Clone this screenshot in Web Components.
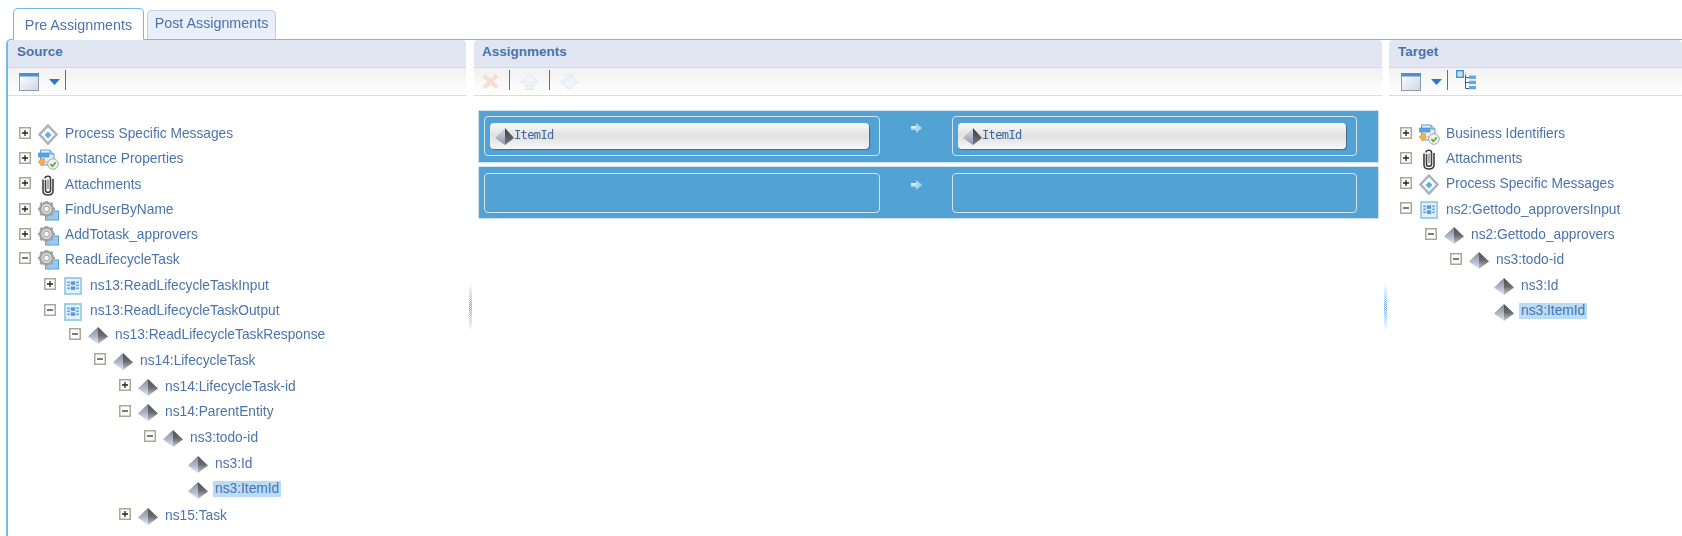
<!DOCTYPE html>
<html lang="en">
<head>
<meta charset="utf-8">
<title>Assignments</title>
<style>
html,body{margin:0;padding:0;background:#fff;height:536px;overflow:hidden;font-family:"Liberation Sans",Arial,sans-serif;color:#4b73ad}
tab-bar,assign-layout{filter:blur(.35px)}
</style>
</head>
<body>
<tab-bar>
  <tab-item active>Pre Assignments</tab-item>
  <tab-item>Post Assignments</tab-item>
</tab-bar>
<assign-layout>
  <map-pane heading="Source" pad="9">
    <tool-bar slot="tools" pad="11">
      <app-icon name="window"></app-icon>
      <app-icon name="drop"></app-icon>
      <tool-sep></tool-sep>
    </tool-bar>
    <tree-list>
      <tree-node level="0" toggle="plus" icon="message" h="25">Process Specific Messages</tree-node>
      <tree-node level="0" toggle="plus" icon="props" h="25">Instance Properties</tree-node>
      <tree-node level="0" toggle="plus" icon="clip" h="26">Attachments</tree-node>
      <tree-node level="0" toggle="plus" icon="gear" h="25">FindUserByName</tree-node>
      <tree-node level="0" toggle="plus" icon="gear" h="25">AddTotask_approvers</tree-node>
      <tree-node level="0" toggle="minus" icon="gear" h="24">ReadLifecycleTask</tree-node>
      <tree-node level="1" toggle="plus" icon="struct" h="28">ns13:ReadLifecycleTaskInput</tree-node>
      <tree-node level="1" toggle="minus" icon="struct" h="23">ns13:ReadLifecycleTaskOutput</tree-node>
      <tree-node level="2" toggle="minus" icon="pyramid" h="25">ns13:ReadLifecycleTaskResponse</tree-node>
      <tree-node level="3" toggle="minus" icon="pyramid" h="26">ns14:LifecycleTask</tree-node>
      <tree-node level="4" toggle="plus" icon="pyramid" h="26">ns14:LifecycleTask-id</tree-node>
      <tree-node level="4" toggle="minus" icon="pyramid" h="25">ns14:ParentEntity</tree-node>
      <tree-node level="5" toggle="minus" icon="pyramid" h="26">ns3:todo-id</tree-node>
      <tree-node level="6" icon="pyramid" h="26">ns3:Id</tree-node>
      <tree-node level="6" icon="pyramid" h="26" selected>ns3:ItemId</tree-node>
      <tree-node level="4" toggle="plus" icon="pyramid" h="26">ns15:Task</tree-node>
    </tree-list>
  </map-pane>
  <pane-gutter></pane-gutter>
  <map-pane heading="Assignments" pad="8">
    <tool-bar slot="tools" pad="8">
      <app-icon name="del"></app-icon>
      <tool-sep></tool-sep>
      <app-icon name="up"></app-icon>
      <tool-sep></tool-sep>
      <app-icon name="down"></app-icon>
    </tool-bar>
    <map-list>
      <map-row top="5">
        <map-box slot="from"><map-pill>ItemId</map-pill></map-box>
        <map-box slot="to"><map-pill>ItemId</map-pill></map-box>
      </map-row>
      <map-row top="6">
        <map-box slot="from"></map-box>
        <map-box slot="to"></map-box>
      </map-row>
    </map-list>
  </map-pane>
  <pane-gutter></pane-gutter>
  <map-pane heading="Target" pad="9">
    <tool-bar slot="tools" pad="12">
      <app-icon name="window"></app-icon>
      <app-icon name="drop"></app-icon>
      <tool-sep></tool-sep>
      <app-icon name="tree"></app-icon>
    </tool-bar>
    <tree-list>
      <tree-node level="0" toggle="plus" icon="props" h="25">Business Identifiers</tree-node>
      <tree-node level="0" toggle="plus" icon="clip" h="25">Attachments</tree-node>
      <tree-node level="0" toggle="plus" icon="message" h="25">Process Specific Messages</tree-node>
      <tree-node level="0" toggle="minus" icon="struct" h="26">ns2:Gettodo_approversInput</tree-node>
      <tree-node level="1" toggle="minus" icon="pyramid" h="25">ns2:Gettodo_approvers</tree-node>
      <tree-node level="2" toggle="minus" icon="pyramid" h="25">ns3:todo-id</tree-node>
      <tree-node level="3" icon="pyramid" h="27">ns3:Id</tree-node>
      <tree-node level="3" icon="pyramid" h="24" selected>ns3:ItemId</tree-node>
    </tree-list>
  </map-pane>
</assign-layout>
<script>
const ICONS = {
  pyramid: `<svg width="20" height="17" viewBox="0 0 20 17"><defs>
    <linearGradient id="a" x1="0" y1="0" x2="0" y2="1"><stop offset="0" stop-color="#808690"/><stop offset=".55" stop-color="#adb9cc"/><stop offset="1" stop-color="#e2e8f2"/></linearGradient>
    <linearGradient id="b" x1="0" y1="0" x2="0" y2="1"><stop offset="0" stop-color="#4c4d50"/><stop offset=".5" stop-color="#6a6c70"/><stop offset="1" stop-color="#c6cad0"/></linearGradient></defs>
    <polygon points="10,0 0,9.500 10,17" fill="url(#a)"/><polygon points="10,0 20,9.500 10,17" fill="url(#b)"/></svg>`,
  pyramid2: `<svg width="20" height="17" viewBox="0 0 20 17"><defs>
    <linearGradient id="c" x1="0" y1="0" x2="0" y2="1"><stop offset="0" stop-color="#d6deea"/><stop offset="1" stop-color="#8d99ad"/></linearGradient>
    <linearGradient id="d" x1="0" y1="0" x2="0" y2="1"><stop offset="0" stop-color="#3e3e40"/><stop offset="1" stop-color="#77797c"/></linearGradient></defs>
    <polygon points="11,0 1,10 11,17" fill="url(#c)"/><polygon points="11,0 20,10 11,17" fill="url(#d)"/></svg>`,
  message: `<svg width="20" height="21" viewBox="0 0 20 21"><polygon points="10,1.500 18.500,10.500 10,19.500 1.500,10.500" fill="#fafbfd" stroke="#a9b2c1" stroke-width="2.500"/><polygon points="10,5 15,10.500 10,16 5,10.500" fill="#fff"/><polygon points="10,7.500 13.500,11 10,14.500 6.500,11" fill="#5aaeee"/></svg>`,
  props: `<svg width="22" height="21" viewBox="0 0 22 21"><path d="M3.500 1h9.500l4 4v11H3.500z" fill="#e3effa" stroke="#5d9bd2"/><path d="M13 1v4h4" fill="#b5d5f0" stroke="#5d9bd2"/><rect x="1.500" y="4" width="10.500" height="4" fill="#5ba3e2" stroke="#4288c8" stroke-width=".6"/><path d="M7 9v3" stroke="#5d9bd2"/><polygon points="5,9 9,13 5,17 1,13" fill="#f8ae4c" stroke="#eb9a36" stroke-width=".6"/><rect x="8" y="12" width="5" height="2" fill="#f8d09a"/><circle cx="16" cy="15" r="5.300" fill="#f2f3f1" stroke="#a3a9a8"/><path d="M13.400 15l2 2.200 3.400-4" fill="none" stroke="#58a638" stroke-width="1.700"/></svg>`,
  clip: `<svg width="14" height="21" viewBox="0 0 14 21"><path d="M4.500 5v10.200c0 1.300 1 2 2.500 2s2.500-.7 2.500-2V3.500C9.500 2.200 8.500 1.300 7 1.300S4 2.200 4 3.500M2 4.500v11.200c0 2.800 2 4.300 5 4.300s5-1.500 5-4.300V4" fill="none" stroke="#3e3e3e" stroke-width="1.600"/><path d="M7 4.500v9.500" stroke="#8b8b8b" stroke-width="1.400"/></svg>`,
  gear: `<svg width="21" height="20" viewBox="0 0 21 20"><rect x="7.500" y="10" width="13" height="9" fill="#97c9f1" stroke="#55a0de"/><g transform="translate(8.500 8) scale(1.050)"><circle r="5.800" fill="none" stroke="#a2a2a2" stroke-width="2.800"/><g stroke="#a2a2a2" stroke-width="2.400"><path d="M0-8.200V8.200M-8.200 0H8.200M-5.800-5.800L5.800 5.800M5.800-5.800L-5.800 5.800"/></g><circle r="5.400" fill="#d8d8d8" stroke="#969696" stroke-width=".8"/><circle r="2.800" fill="#f7f7f7" stroke="#969696" stroke-width=".9"/></g></svg>`,
  struct: `<svg width="18" height="18" viewBox="0 0 18 18"><rect x="1" y="1" width="16" height="16" fill="#e2f0fa" stroke="#9ccbe4" stroke-width="1.800"/><g fill="#5a9bd3"><rect x="6.800" y="4.300" width="4.400" height="3.600"/><rect x="6.800" y="9.300" width="4.400" height="3.600"/><rect x="3.300" y="4.500" width="2.400" height="1.600"/><rect x="3.300" y="7.500" width="2.400" height="1.600"/><rect x="3.300" y="10.500" width="2.400" height="1.600"/><rect x="12.300" y="4.500" width="2.400" height="1.600"/><rect x="12.300" y="7.500" width="2.400" height="1.600"/><rect x="12.300" y="10.500" width="2.400" height="1.600"/></g></svg>`,
  window: `<svg width="20" height="18" viewBox="0 0 20 18"><defs><linearGradient id="w" x1="0" y1="0" x2="1" y2="1"><stop offset="0" stop-color="#fff"/><stop offset="1" stop-color="#cfd6e2"/></linearGradient></defs><rect x=".5" y=".5" width="19" height="17" fill="url(#w)" stroke="#8d9bac"/><rect x="0" y="0" width="20" height="3.500" fill="#4d90cf"/></svg>`,
  drop: `<svg width="11" height="6" viewBox="0 0 11 6"><polygon points="0,0 11,0 5.500,6" fill="#2f78c4"/></svg>`,
  tree: `<svg width="20" height="20" viewBox="0 0 20 20"><rect x=".7" y=".7" width="6.600" height="6.600" fill="#bfe0f7" stroke="#3f8cd0" stroke-width="1.300"/><path d="M9.500 7.500h4M9.500 4.500v14h4M9.500 12.500h4" fill="none" stroke="#3a5f80"/><rect x="13" y="5.500" width="7" height="3.400" fill="#62a8e0"/><rect x="13" y="10.700" width="7" height="3.400" fill="#62a8e0"/><rect x="13" y="15.900" width="7" height="3.400" fill="#62a8e0"/></svg>`,
  del: `<svg width="17" height="17" viewBox="0 0 17 17"><path d="M2 2.500L15 14.500M15 2.500L2 14.500" stroke="#f8dcd2" stroke-width="4"/></svg>`,
  up: `<svg width="19" height="18" viewBox="0 0 19 18"><polygon points="9.500,1 18.500,9.500 14,9.500 14,13 5,13 5,9.500 .5,9.500" fill="#eef5f8" stroke="#dde9ee"/><rect x="5" y="14.500" width="9" height="2.500" fill="#e4eff4"/></svg>`,
  down: `<svg width="19" height="18" viewBox="0 0 19 18"><polygon points="9.500,17 18.500,8.500 14,8.500 14,5 5,5 5,8.500 .5,8.500" fill="#eef5f8" stroke="#dde9ee"/><rect x="5" y="1" width="9" height="2.500" fill="#e4eff4"/></svg>`,
  arrow: `<svg width="11" height="12" viewBox="0 0 11 12"><polygon points="0,4 5,4 5,1 11,6 5,11 5,8 0,8" fill="#a9d7f5"/><polygon points="0,4 5,4 5,6 0,6" fill="#dcf0fc"/></svg>`,
  plus: `<svg width="12" height="12" viewBox="0 0 12 12"><rect x=".75" y=".75" width="10.500" height="10.500" fill="#fff" stroke="#aca898" stroke-width="1.500"/><path d="M3 6h6M6 3v6" stroke="#222" stroke-width="1.300"/></svg>`,
  minus: `<svg width="12" height="12" viewBox="0 0 12 12"><rect x=".75" y=".75" width="10.500" height="10.500" fill="#fff" stroke="#aca898" stroke-width="1.500"/><path d="M3 6h6" stroke="#333" stroke-width="1.300"/></svg>`
};

class Base extends HTMLElement {
  constructor(){ super(); this.attachShadow({mode:'open'}); }
}
class AppIcon extends Base {
  connectedCallback(){
    const n = this.getAttribute('name');
    const extra = n === 'drop' ? 'margin-right:-5px;' : n === 'tree' ? 'margin-left:-2px;margin-bottom:3px;' : '';
    this.shadowRoot.innerHTML = `<style>:host{display:inline-flex;align-items:center;justify-content:center;line-height:0;flex:none;${extra}}</style>${ICONS[n]}`;
  }
}
class TabBar extends Base {
  connectedCallback(){
    this.shadowRoot.innerHTML = `<style>:host{display:flex;align-items:flex-end;gap:3px;height:40px;margin-bottom:-1px;padding-left:13px;box-sizing:border-box;position:relative;z-index:1}</style><slot></slot>`;
  }
}
class TabItem extends Base {
  connectedCallback(){
    const active = this.hasAttribute('active');
    this.shadowRoot.innerHTML = `<style>:host{display:flex;align-items:center;justify-content:center;box-sizing:border-box;font-size:14.3px;color:#4b73ad;border-radius:5px 5px 0 0;
      ${active ? 'width:131px;height:32px;background:#fff;border:1px solid #6db8ec;border-bottom:1px solid #fff;padding-top:1px;' : 'width:129px;height:29px;margin-bottom:1px;background:#e8eff8;border:1px solid #bcd0e6;border-bottom:0;padding-bottom:5px;'}}</style><slot></slot>`;
  }
}
class AssignLayout extends Base {
  connectedCallback(){
    this.shadowRoot.innerHTML = `<style>:host{display:grid;grid-template-columns:458px 8px 908px 7px 293px;margin-left:6px;height:497px;box-sizing:border-box;border-top:1px solid #72bbea;border-left:2px solid #72bbea;border-top-left-radius:5px;overflow:hidden}</style><slot></slot>`;
  }
}
class MapPane extends Base {
  connectedCallback(){
    const p = this.getAttribute('pad') || 8;
    this.shadowRoot.innerHTML = `<style>
      :host{display:flex;flex-direction:column;min-width:0;overflow:hidden}
      .head{height:28px;box-sizing:border-box;background:#e1e7f2;border-bottom:1px solid #d0dae9;border-radius:4px 4px 0 0;padding:0 ${p}px 5px;font-weight:bold;font-size:13.5px;color:#4a72ac;display:flex;align-items:center}
      </style><div class="head">${this.getAttribute('heading')}</div><slot name="tools"></slot><slot></slot>`;
  }
}
class PaneGutter extends Base {
  connectedCallback(){
    this.shadowRoot.innerHTML = `<style>
      :host{display:flex;justify-content:center;padding-top:243px;box-sizing:border-box}
      i{display:block;width:3px;height:48px;background:repeating-conic-gradient(#7fb2ec 0 25%,#dbe9fb 0 50%) 0 0/2px 2px;-webkit-mask-image:linear-gradient(transparent,#000 45%,#000 55%,transparent)}
      </style><i></i>`;
  }
}
class ToolBar extends Base {
  connectedCallback(){
    const p = this.getAttribute('pad') || 8;
    this.shadowRoot.innerHTML = `<style>:host{display:flex;align-items:center;gap:10px;height:28px;box-sizing:border-box;padding-left:${p}px;background:linear-gradient(#f1f1f1,#fff);border-bottom:1px solid #d0dcec}</style><slot></slot>`;
  }
}
class ToolSep extends Base {
  connectedCallback(){
    this.shadowRoot.innerHTML = `<style>:host{display:block;width:1px;height:20px;margin-bottom:3px;background:#4874ad;flex:none}</style>`;
  }
}
class TreeList extends Base {
  connectedCallback(){
    this.shadowRoot.innerHTML = `<style>:host{display:block;padding-top:25px}</style><slot></slot>`;
  }
}
class TreeNode extends Base {
  connectedCallback(){
    const level = +this.getAttribute('level') || 0;
    const toggle = this.getAttribute('toggle');
    const icon = this.getAttribute('icon');
    const h = this.getAttribute('h') || 25;
    const sel = this.hasAttribute('selected');
    this.shadowRoot.innerHTML = `<style>
      :host{display:flex;align-items:center;height:${h}px;padding-left:${11 + 25 * level}px;font-size:13.75px;color:#4b73ad;white-space:nowrap}
      .t{width:12px;height:12px;margin-bottom:2px;line-height:0;flex:none}
      .i{width:26px;margin-left:6px;margin-right:2px;display:flex;justify-content:center;padding-right:4px;box-sizing:border-box;line-height:0;flex:none;margin-top:2px}
      .x{${sel ? 'background:#b9ddf7;padding:0 2px;margin-left:-2px;line-height:16px;' : ''}}
      </style><span class="t">${toggle ? ICONS[toggle] : ''}</span><span class="i">${ICONS[icon] || ''}</span><span class="x"><slot></slot></span>`;
  }
}
class MapList extends Base {
  connectedCallback(){
    this.shadowRoot.innerHTML = `<style>:host{display:flex;flex-direction:column;gap:3px;padding:14px 0 0 4px}</style><slot></slot>`;
  }
}
class MapRow extends Base {
  connectedCallback(){
    const top = this.getAttribute('top') || 5;
    this.shadowRoot.innerHTML = `<style>
      :host{display:grid;grid-template-columns:396px 72px 405px;width:901px;height:53px;box-sizing:border-box;padding:${top}px 0 0 5px;background:#52a2d3;border:1px solid #d2e3f0}
      .a{display:flex;justify-content:center;padding-top:6px;line-height:0;align-items:flex-start}
      </style><slot name="from"></slot><div class="a">${ICONS.arrow}</div><slot name="to"></slot>`;
  }
}
class MapBox extends Base {
  connectedCallback(){
    this.shadowRoot.innerHTML = `<style>:host{display:block;height:40px;box-sizing:border-box;border:1px solid #d4e5f1;border-radius:4px;padding:6px 10px 0 5px}</style><slot></slot>`;
  }
}
class MapPill extends Base {
  connectedCallback(){
    this.shadowRoot.innerHTML = `<style>
      :host{display:flex;align-items:center;height:26px;box-sizing:border-box;padding:0 0 2px 4px;border-radius:4px;background:linear-gradient(#fafafa,#e2e2e2 45%,#e4e4e4 60%,#f8f8f8);box-shadow:1px 1px 1px #4d6a86;font:12px "DejaVu Sans Mono",monospace;letter-spacing:-.6px;color:#3f68a0}
      .i{line-height:0;margin-top:2px}
      </style><span class="i">${ICONS.pyramid2}</span><slot></slot>`;
  }
}
const defs = {'app-icon':AppIcon,'tab-bar':TabBar,'tab-item':TabItem,'assign-layout':AssignLayout,'map-pane':MapPane,'pane-gutter':PaneGutter,'tool-bar':ToolBar,'tool-sep':ToolSep,'tree-list':TreeList,'tree-node':TreeNode,'map-list':MapList,'map-row':MapRow,'map-box':MapBox,'map-pill':MapPill};
for (const k in defs) customElements.define(k, defs[k]);
</script>
</body>
</html>
